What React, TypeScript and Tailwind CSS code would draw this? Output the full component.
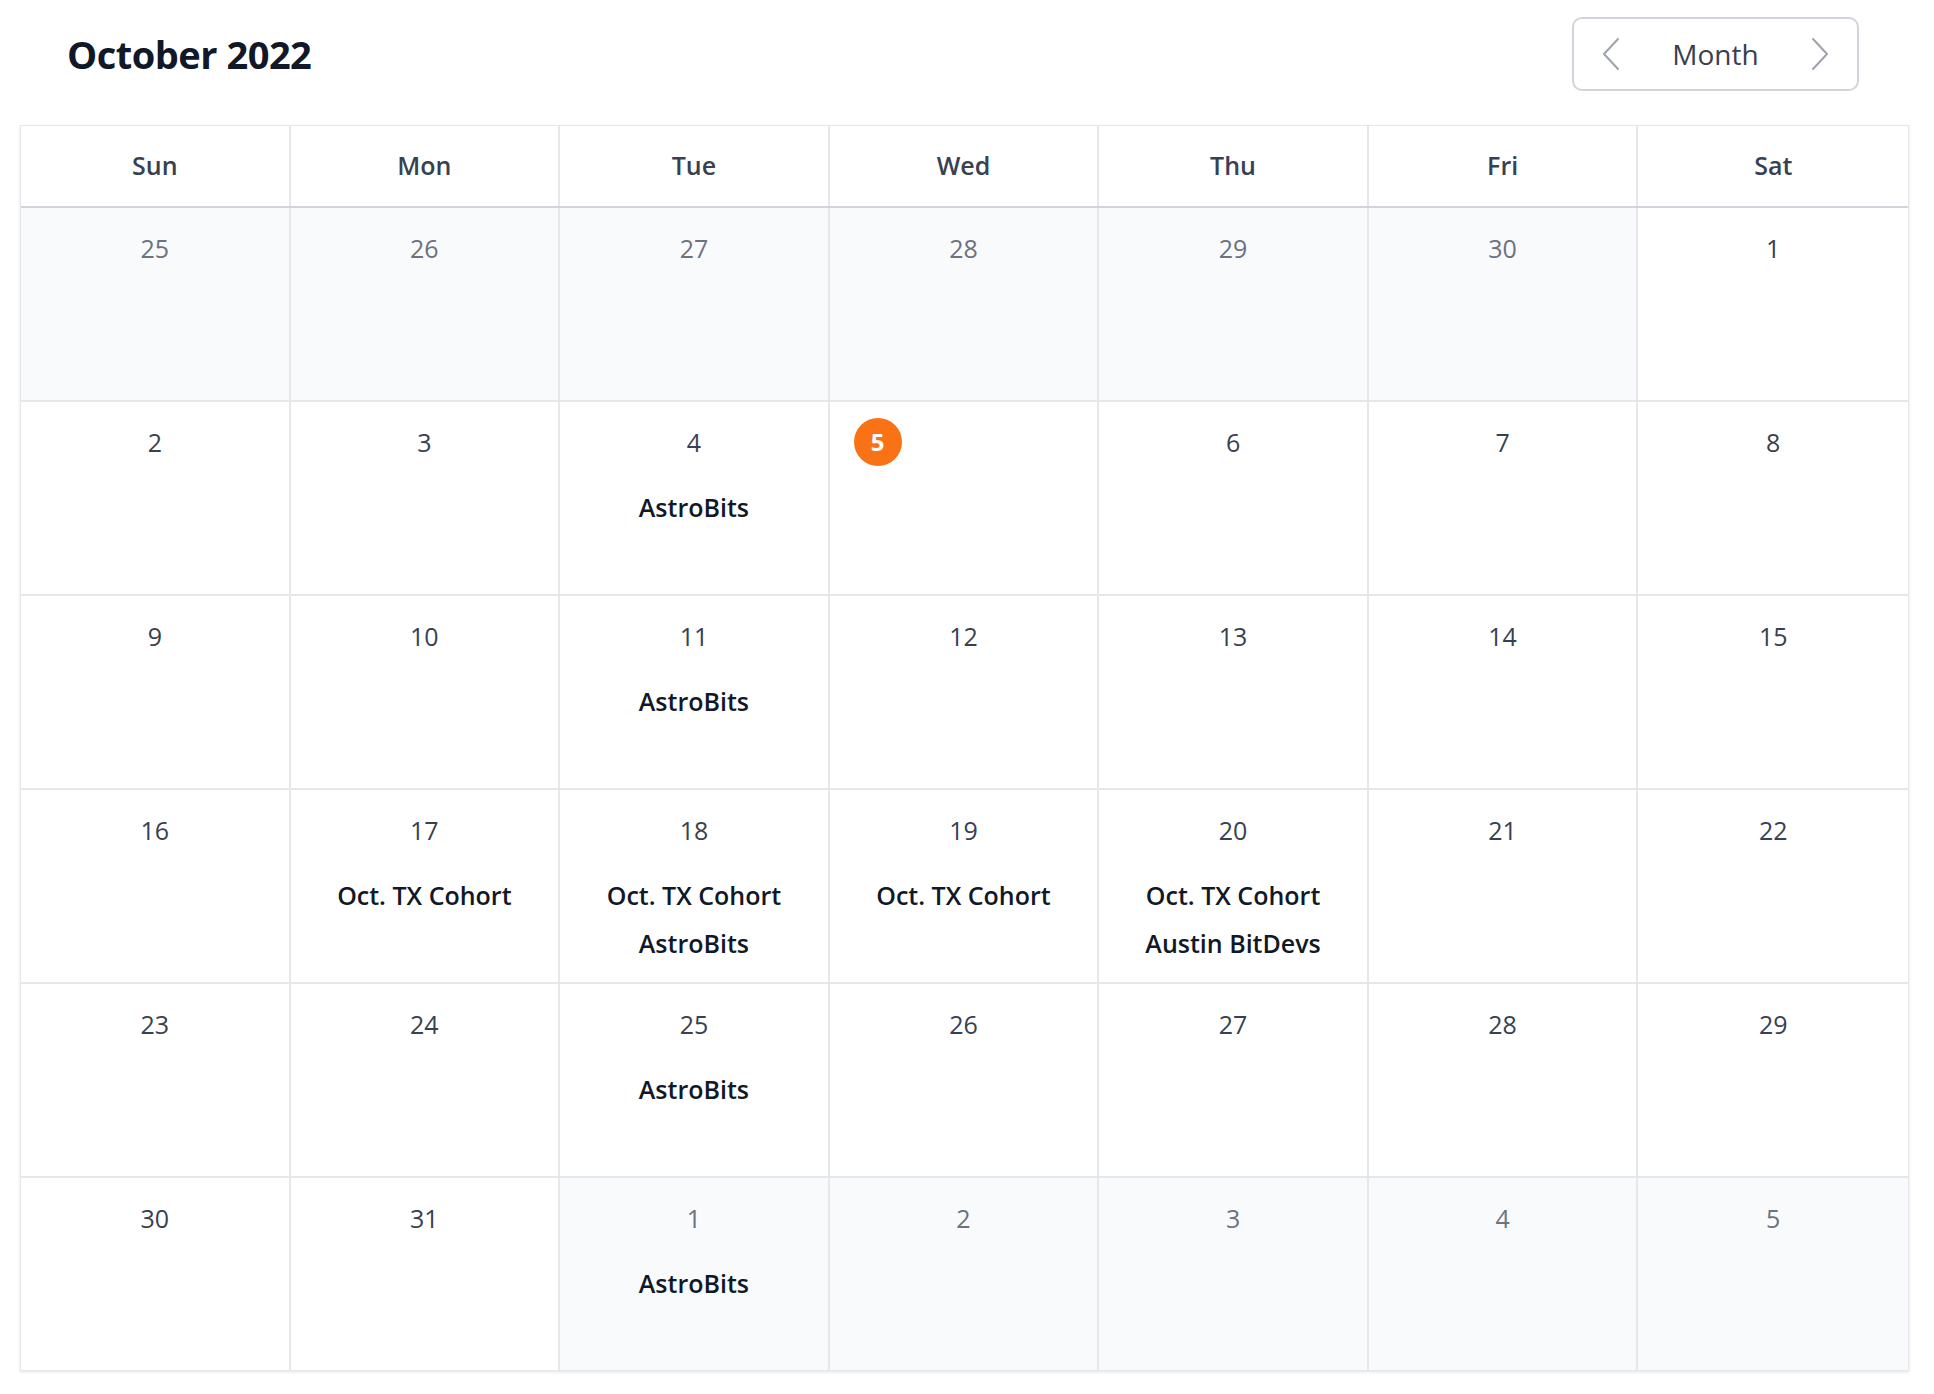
const days = ['Sun', 'Mon', 'Tue', 'Wed', 'Thu', 'Fri', 'Sat'];

type Cell = { day: number; outside?: boolean; today?: boolean; events?: string[] };

const weeks: Cell[][] = [
  [
    { day: 25, outside: true },
    { day: 26, outside: true },
    { day: 27, outside: true },
    { day: 28, outside: true },
    { day: 29, outside: true },
    { day: 30, outside: true },
    { day: 1 },
  ],
  [
    { day: 2 },
    { day: 3 },
    { day: 4, events: ['AstroBits'] },
    { day: 5, today: true },
    { day: 6 },
    { day: 7 },
    { day: 8 },
  ],
  [
    { day: 9 },
    { day: 10 },
    { day: 11, events: ['AstroBits'] },
    { day: 12 },
    { day: 13 },
    { day: 14 },
    { day: 15 },
  ],
  [
    { day: 16 },
    { day: 17, events: ['Oct. TX Cohort'] },
    { day: 18, events: ['Oct. TX Cohort', 'AstroBits'] },
    { day: 19, events: ['Oct. TX Cohort'] },
    { day: 20, events: ['Oct. TX Cohort', 'Austin BitDevs'] },
    { day: 21 },
    { day: 22 },
  ],
  [
    { day: 23 },
    { day: 24 },
    { day: 25, events: ['AstroBits'] },
    { day: 26 },
    { day: 27 },
    { day: 28 },
    { day: 29 },
  ],
  [
    { day: 30 },
    { day: 31 },
    { day: 1, outside: true, events: ['AstroBits'] },
    { day: 2, outside: true },
    { day: 3, outside: true },
    { day: 4, outside: true },
    { day: 5, outside: true },
  ],
];

function Chevron({ dir }: { dir: 'left' | 'right' }) {
  return (
    <svg width="18" height="34" viewBox="0 0 18 34" fill="none" className="text-[#9ca3af]">
      <polyline
        points={dir === 'left' ? '16,2 2,17 16,32' : '2,2 16,17 2,32'}
        stroke="currentColor"
        strokeWidth="2"
        strokeLinecap="round"
        strokeLinejoin="round"
      />
    </svg>
  );
}

export default function App() {
  return (
    <div className="min-h-[1394px] bg-white font-['Open_Sans',sans-serif]">
      {/* Top bar */}
      <div className="flex items-center justify-between pl-[67px] pr-[75px] pt-[17px]">
        <h1 className="text-[38px] font-bold leading-none tracking-[-0.5px] text-[#111827]">October 2022</h1>
        <div className="flex h-[74px] w-[287px] items-center justify-between rounded-[10px] border-2 border-[#d1d5db] px-[28px]">
          <Chevron dir="left" />
          <span className="text-[28px] font-medium text-[#374151]">Month</span>
          <Chevron dir="right" />
        </div>
      </div>

      {/* Calendar grid */}
      <div className="ml-[20px] mt-[34px] w-[1889px] border border-[#e5e7eb] shadow-[0_1px_3px_rgba(0,0,0,0.12)]">
        <div className="grid grid-cols-7 border-b-2 border-[#d1d5db]">
          {days.map((d, i) => (
            <div
              key={d}
              className={`flex h-[80px] items-center justify-center text-[25px] font-semibold text-[#374151] ${i < 6 ? 'border-r-2 border-[#e5e7eb]' : ''}`}
            >
              {d}
            </div>
          ))}
        </div>
        {weeks.map((week, wi) => (
          <div key={wi} className={`grid grid-cols-7 ${wi < 5 ? 'border-b-2 border-[#e5e7eb]' : ''}`}>
            {week.map((c, ci) => (
              <div
                key={ci}
                className={`h-[192px] pt-[22px] ${c.outside ? 'bg-[#f9fafb]' : 'bg-white'} ${ci < 6 ? 'border-r-2 border-[#e5e7eb]' : ''}`}
              >
                {c.today ? (
                  <div className="flex h-[36px] items-center pl-[24px]">
                    <span className="flex h-[48px] w-[48px] items-center justify-center rounded-full bg-[#f97316] text-[24px] font-bold text-white">
                      {c.day}
                    </span>
                  </div>
                ) : (
                  <div className={`text-center text-[25px] leading-[36px] ${c.outside ? 'text-[#6b7280]' : 'text-[#374151]'}`}>
                    {c.day}
                  </div>
                )}
                {c.events && (
                  <div className="mt-[23px] flex flex-col">
                    {c.events.map((e) => (
                      <div key={e} className="text-center text-[25px] font-semibold leading-[48px] text-[#111827]">
                        {e}
                      </div>
                    ))}
                  </div>
                )}
              </div>
            ))}
          </div>
        ))}
      </div>
    </div>
  );
}
